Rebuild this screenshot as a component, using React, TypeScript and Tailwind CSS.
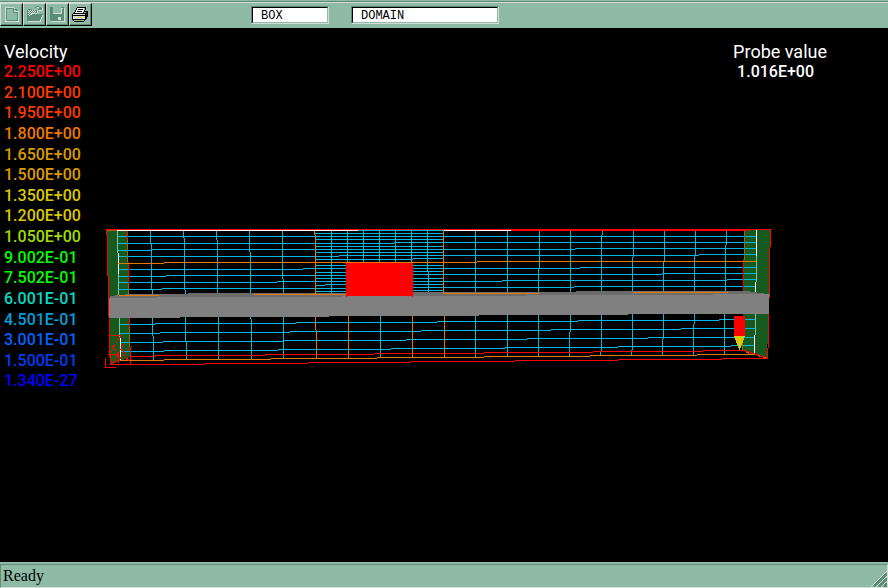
import { useState, type ReactNode } from 'react'

const LEGEND = [
  { value: '2.250E+00', color: 'text-[#ff0000]' },
  { value: '2.100E+00', color: 'text-[#ff3a00]' },
  { value: '1.950E+00', color: 'text-[#ff3a00]' },
  { value: '1.800E+00', color: 'text-[#f07800]' },
  { value: '1.650E+00', color: 'text-[#dc9c00]' },
  { value: '1.500E+00', color: 'text-[#dc9c00]' },
  { value: '1.350E+00', color: 'text-[#dcc800]' },
  { value: '1.200E+00', color: 'text-[#dcc800]' },
  { value: '1.050E+00', color: 'text-[#a0dc00]' },
  { value: '9.002E-01', color: 'text-[#00ff00]' },
  { value: '7.502E-01', color: 'text-[#00ff00]' },
  { value: '6.001E-01', color: 'text-[#00dcc8]' },
  { value: '4.501E-01', color: 'text-[#00a0dc]' },
  { value: '3.001E-01', color: 'text-[#0064ff]' },
  { value: '1.500E-01', color: 'text-[#003cf0]' },
  { value: '1.340E-27', color: 'text-[#0000ff]' },
]

// A trace is [start, level, end, level, end, ...]: the level steps at each end
type Trace = number[]

const CYAN_ROWS: Trace[] = [
  [118, 236, 756],
  [118, 243, 394, 242, 756],
  [118, 250, 152, 249, 575, 248, 756],
  [118, 256, 339, 255, 699, 254, 756],
  [118, 269, 303, 268, 580, 267, 756],
  [118, 276, 166, 275, 413, 274, 662, 273, 756],
  [118, 282, 277, 281, 502, 280, 727, 279, 756],
  [118, 289, 162, 288, 413, 287, 574, 286, 756],
  [119, 324, 155, 323, 296, 322, 437, 321, 578, 320, 719, 319, 755],
  [120, 333, 160, 332, 290, 331, 421, 330, 551, 329, 681, 328, 755],
  [120, 342, 163, 341, 284, 340, 406, 339, 527, 338, 648, 337, 755],
  [120, 351, 164, 350, 278, 349, 391, 348, 505, 347, 618, 346, 731, 345, 755],
  // refined region around the box
  [315, 233, 443],
  [315, 239, 443],
  [315, 246, 443],
  [315, 252, 443],
  [315, 259, 413, 258, 443],
  [315, 265, 443],
  [315, 272, 413, 271, 443],
  [315, 278, 443],
  [315, 285, 325, 284, 443],
  [315, 291, 413, 290, 443],
  [358, 230, 444],
]

const CYAN_COLUMNS: Trace[] = [
  [231, 150, 243, 151, 290, 152, 295],
  [231, 183, 238, 184, 290, 185, 295],
  [231, 216, 240, 217, 295],
  [231, 249, 252, 250, 295],
  [231, 282, 279, 283, 294],
  [231, 331, 294],
  [231, 347, 262],
  [231, 363, 262],
  [231, 379, 262],
  [231, 395, 262],
  [231, 411, 262],
  [231, 427, 271, 428, 294],
  [231, 475, 294],
  [231, 507, 294],
  [230, 539, 268, 538, 293],
  [230, 570, 293],
  [230, 602, 235, 601, 293],
  [230, 633, 257, 632, 293],
  [230, 664, 262, 663, 293],
  [230, 695, 255, 694, 293],
  [230, 726, 245, 725, 293],
  [317, 152, 336, 153, 360],
  [317, 185, 341, 186, 359],
  [317, 218, 359],
  [317, 250, 319, 251, 359],
  [317, 283, 359],
  [316, 380, 357],
  [316, 475, 357],
  [315, 507, 356],
  [315, 538, 356],
  [315, 570, 332, 569, 356],
  [315, 601, 351, 600, 355],
  [314, 632, 350, 631, 355],
  [314, 663, 339, 662, 355],
  [314, 694, 324, 693, 355],
  [314, 724, 355],
]

const ORANGE_ROWS: Trace[] = [
  [118, 263, 164, 262, 477, 261, 756],
  [119, 295, 159],
  [254, 294, 346],
  [443, 293, 539],
  [633, 292, 728],
  [120, 360, 164, 359, 271, 358, 377, 357, 484, 356, 590, 355, 697, 354, 755],
]

const ORANGE_COLUMNS: Trace[] = [
  [231, 314, 235, 315, 294],
  [231, 443, 294],
  [317, 315, 330, 316, 358],
  [316, 348, 358],
  [316, 412, 357],
  [316, 444, 357],
]

const RED_ROWS: Trace[] = [
  [106, 229, 771],
  [511, 230, 749],
  [130, 356, 155, 355, 265, 354, 374, 353, 484, 352, 593, 351, 703, 350, 744],
  [110, 364, 205, 363, 308, 362, 411, 361, 515, 360, 618, 359, 722, 358, 768],
]

const RED_COLUMNS: Trace[] = [
  [230, 106, 235, 107, 276, 108, 317, 109, 358, 110, 365],
  [231, 127, 240],
  [262, 128, 284],
  [317, 129, 327],
  [347, 130, 357],
  [229, 770, 247, 769, 298],
  [314, 768, 348, 767, 359],
  [260, 743, 291],
]

const BROWN_COLUMNS: Trace[] = [
  [240, 127, 262],
  [284, 128, 294],
  [327, 129, 347],
  [231, 744, 260],
  [343, 742, 351],
]

const PALE_COLUMNS: Trace[] = [
  [231, 117, 253],
  [274, 118, 296],
  [317, 119, 338],
  [256, 756, 282],
  [314, 755, 335],
]

const WHITE_COLUMNS: Trace[] = [
  [253, 118, 274],
  [338, 120, 360],
  [230, 756, 256],
  [282, 755, 292],
  [335, 754, 355],
]

function tracePath(traces: Trace[], vertical = false) {
  let d = ''
  for (const t of traces) {
    for (let i = 0; i + 2 < t.length; i += 2) {
      const level = t[i + 1] + 0.5
      d += vertical ? `M${level} ${t[i]}V${t[i + 2]}` : `M${t[i]} ${level}H${t[i + 2]}`
    }
  }
  return d
}

function Scene() {
  return (
    <svg
      viewBox="0 28 888 534"
      className="col-start-1 row-start-1 w-full h-full"
      shapeRendering="crispEdges"
      fill="none"
      role="img"
      aria-label="Velocity mesh"
    >
      {/* Inlet and outlet planes */}
      <path d="M107 230H128L130 357L110 365Z" fill="#165a20" />
      <path d="M744 230H770L769 300L767 359L742 350Z" fill="#165a20" />

      {/* Mesh */}
      <path d={tracePath(CYAN_COLUMNS, true)} stroke="#00b8e6" />
      <path d={tracePath(CYAN_ROWS)} stroke="#00b8e6" />
      <path d={tracePath(BROWN_COLUMNS, true)} stroke="#a06400" />
      <path d={tracePath(RED_ROWS)} stroke="#ff0000" />
      <path d={tracePath(RED_COLUMNS, true)} stroke="#ff0000" />
      <path d="M117 230.5H358M444 230.5H511" stroke="#ffffff" />
      <path d={tracePath(PALE_COLUMNS, true)} stroke="#8cbca4" />
      <path d={tracePath(WHITE_COLUMNS, true)} stroke="#ffffff" />
      <path d="M107 230.5H117" stroke="#a06400" />
      <path d="M744 350.5L768 358.5" stroke="#ff0000" />
      <path d="M746 352.5L766 358" stroke="#c87800" strokeDasharray="3 3" />

      {/* Contour slab */}
      <path d="M110 297H115V295H125V294H188V293H412V292H576V291H750V292H757V293H764V294H770V296H110Z" fill="#6c6c6c" />
      <path d="M109 298H110V296H770V294H769V314H628V315H479V316H329V317H180V318H109Z" fill="#6c6c6c" />
      <path d="M109 298H157V297H342V296H527V295H713V294H769V314H628V315H479V316H329V317H180V318H109Z" fill="#808080" />

      <path d={tracePath(ORANGE_COLUMNS, true)} stroke="#e67800" />
      <path d={tracePath(ORANGE_ROWS)} stroke="#e67800" />

      {/* Box */}
      <path d="M346 263H413V297H412V296H347V297H346Z" fill="#ff0000" />
      <path d="M345 263.5H347M349 261.5H350" stroke="#ff0000" />

      {/* Probe */}
      <path d="M734 316H745V336H734Z" fill="#ff0000" />
      <path d="M734 336H745V337H744V340H743V343H742V345H741V348H740V350H739V348H738V345H737V343H736V340H735V338H734Z" fill="#dcc800" />

      {/* Axes */}
      <path
        d="M105.5 358V367.5H116M110 335.5H120.5V338M108 354.5H119M110.5 354V365M118.5 354V363"
        stroke="#ff0000"
      />
      <path
        d="M120 337L110 353M112 345L119 355M121 348L129 361M124 344L113 362M132 346L121 357L118 363M130.5 357V364M110 364L119 360M126 360V356"
        stroke="#ff0000"
        strokeDasharray="3 1"
      />
    </svg>
  )
}

function ToolButton({ label, disabled, children }: { label: string; disabled?: boolean; children: ReactNode }) {
  return (
    <button
      aria-label={label}
      disabled={disabled}
      className="w-[23px] h-[23px] border-t border-l border-t-[#d4dcd8] border-l-[#d4dcd8] border-r border-b border-r-black border-b-black"
    >
      <svg viewBox="0 0 21 21" className="w-[21px] h-[21px]" shapeRendering="crispEdges" fill="none">
        <path d="M0 20.5H20.5V0" stroke="#5a8c78" />
        {children}
      </svg>
    </button>
  )
}

function Toolbar() {
  const [object, setObject] = useState('BOX')
  const [domain, setDomain] = useState('DOMAIN')
  const fieldClass =
    'h-[18px] border border-t-[#5a8c78] border-l-[#5a8c78] border-r-[#d4dcd8] border-b-[#d4dcd8] bg-[#8fbaa6]'
  const inputClass =
    'block w-full h-4 pl-2 pt-0.5 bg-white border-t border-l border-t-black border-l-black border-r border-b border-r-[#8fbaa6] border-b-[#8fbaa6] text-[12px] leading-3 text-black font-["Liberation_Mono",monospace] outline-none'

  return (
    <header className="h-7 pt-px bg-[#8fbaa6]">
      <div className="h-[27px] flex border-t border-[#5a8c78]">
        <div className="w-full flex border-t border-[#d4dcd8]">
          <div className="flex">
            <ToolButton label="New" disabled>
              <path d="M4.5 18V3.5H13M5 17.5H17.5V7M13.5 4V7.5H17" stroke="#d4dcd8" />
              <path d="M5.5 16V4.5H12.5V8.5H16.5V16.5H5.5M13 5.5H15V7" stroke="#5a8c78" />
            </ToolButton>
            <ToolButton label="Open" disabled>
              <path d="M3 6H4V5H8V6H13V9H3Z" fill="#5a8c78" />
              <path d="M3.5 6V17M4.5 8V16M5.5 8V14M6.5 8V12" stroke="#5a8c78" />
              <path d="M4 6.5H12M5 7.5H13M4 8.5H12M5 9.5H9M4 10.5H8M5 11.5H7" stroke="#d4dcd8" strokeDasharray="1 1" />
              <path d="M8 10H19V11H18V13H17V15H16V17H4V15H5V13H6V11H8Z" fill="#5a8c78" />
              <path d="M11 3.5H12M12 2.5H15M15 3.5H16M16.5 3V6M14 5.5H18M15 4.5H18" stroke="#5a8c78" />
              <path d="M4 17.5H16.5V15M17.5 15V13M18.5 13V11M8 9.5H13M7 10.5H8M13 3.5H15M18.5 4V7M15 6.5H18M13.5 6V9" stroke="#d4dcd8" />
            </ToolButton>
            <ToolButton label="Save" disabled>
              <path d="M3 3H17V17H4V16H3Z" fill="#5a8c78" />
              <path d="M6 3H14V10H6Z" fill="#8fbaa6" />
              <path d="M11 13H14V16H11Z" fill="#d4dcd8" />
              <path d="M17.5 4V17.5H4M6 9.5H14M14.5 4V10M15 4.5H16" stroke="#d4dcd8" />
            </ToolButton>
            <ToolButton label="Print">
              <path d="M7 3H15L13 9H5Z" fill="#ffffff" />
              <path d="M3 9H16V16H3Z" fill="#d4dcd8" />
              <path
                d="M7 3.5H16M6.5 4V6M5.5 6V8M4.5 8V10M15.5 3V6M14.5 6V8M13.5 8V10M8 5.5H13M7 7.5H12M3 9.5H15M2.5 10V16M3 11.5H15M3 15.5H15M15.5 9V16M16.5 8V15M17.5 7V13M15 7.5H18M4 17.5H14M3.5 16V17M14.5 15V17M16 11.5H18"
                stroke="#000000"
              />
              <path d="M8 13.5H12" stroke="#dcdc00" />
            </ToolButton>
          </div>
          <div className="flex gap-[22px] pl-[159px] pt-[3px]">
            <div className={`w-[78px] ${fieldClass}`}>
              <input aria-label="Object" className={inputClass} value={object} onChange={(e) => setObject(e.target.value)} />
            </div>
            <div className={`w-[148px] ${fieldClass}`}>
              <input aria-label="Domain" className={inputClass} value={domain} onChange={(e) => setDomain(e.target.value)} />
            </div>
          </div>
        </div>
      </div>
    </header>
  )
}

function StatusBar() {
  return (
    <footer className="h-[26px] pt-0.5 bg-[#8fbaa6]">
      <div className="h-6 flex items-end justify-between border border-t-[#5a8c78] border-l-[#5a8c78] border-r-[#d4dcd8] border-b-[#d4dcd8]">
        <span className="pl-0.5 text-[16px] leading-[22px] text-black font-['Liberation_Serif',serif]">Ready</span>
        <svg viewBox="0 0 16 16" className="w-4 h-4" shapeRendering="crispEdges" fill="none">
          <path d="M3 16L16 3M8 16L16 8M13 16L16 13" stroke="#5a8c78" strokeWidth="3" />
          <path d="M0 16L16 0M5 16L16 5M10 16L16 10" stroke="#d4dcd8" />
        </svg>
      </div>
    </footer>
  )
}

export default function App() {
  return (
    <div className="min-h-screen flex flex-col bg-black font-[Roboto,sans-serif]">
      <Toolbar />

      <main className="flex-1 grid grid-cols-1 text-white">
        <Scene />

        {/* Readouts over the scene */}
        <div className="col-start-1 row-start-1 z-10 flex items-start justify-between pt-3.5 pl-1 pr-[61px]">
          <section>
            <h1 className="text-[18px] leading-5">Velocity</h1>
            <ul className="h-[330px] grid auto-rows-fr text-[16px] leading-5 font-medium">
              {LEGEND.map(({ value, color }) => (
                <li key={value} className={color}>
                  {value}
                </li>
              ))}
            </ul>
          </section>
          <section>
            <h2 className="text-[18px] leading-5">Probe value</h2>
            <p className="pl-1 text-[16px] leading-5 font-medium">1.016E+00</p>
          </section>
        </div>
      </main>

      <StatusBar />
    </div>
  )
}
